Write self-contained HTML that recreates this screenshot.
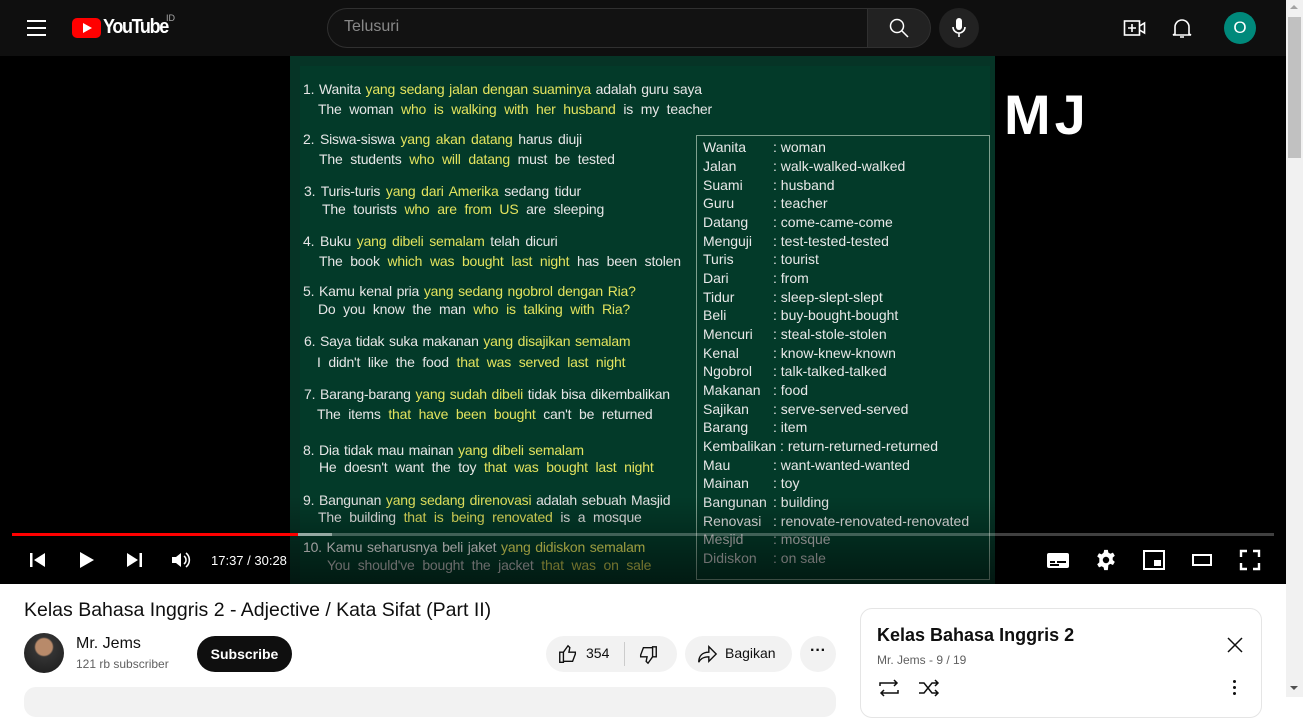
<!DOCTYPE html>
<html><head><meta charset="utf-8"><style>
*{margin:0;padding:0;box-sizing:border-box}
body{width:1303px;height:697px;overflow:hidden;background:#fff;font-family:"Liberation Sans",sans-serif;position:relative}
.hdr{position:absolute;left:0;top:0;width:1286px;height:56px;background:#0f0f0f}
.sb{position:absolute;left:1286px;top:0;width:17px;height:697px;background:#f1f1f1}
.thumb{position:absolute;left:1288px;top:17px;width:13px;height:141px;background:#c1c1c1}
.vid{position:absolute;left:0;top:56px;width:1286px;height:528px;background:#000;overflow:hidden}
.board{position:absolute;left:290px;top:0;width:705px;height:528px;background:#063426}
.inner{position:absolute;left:300px;top:10px;width:690px;height:516px;background:#033a29}
.t{position:absolute;color:#e6e6e6;font-size:14px;white-space:nowrap;letter-spacing:-0.2px}
.e{word-spacing:4px}
.y{color:#e3e35e}
.tbl{position:absolute;left:696px;top:79px;width:294px;height:445px;border:1.5px solid #7fa08f}
.r{position:absolute;left:703px;color:#e8e8e8;font-size:14px;white-space:nowrap}
.r b{font-weight:normal;position:absolute;left:70px}
.ctl{position:absolute;color:#fff}
</style></head><body>
<div class="hdr">
 <div style="position:absolute;left:27px;top:20px;width:19px;height:2px;background:#fff;box-shadow:0 7px 0 #fff,0 14px 0 #fff"></div>
 <div style="position:absolute;left:72px;top:18px;width:29px;height:20px;background:#f00;border-radius:5px"></div>
 <div style="position:absolute;left:83px;top:23px;border-left:9px solid #fff;border-top:5px solid transparent;border-bottom:5px solid transparent"></div>
 <div style="position:absolute;left:103px;top:16px;color:#fff;font-size:20px;font-weight:bold;letter-spacing:-1.5px;transform:scaleX(.9);transform-origin:left">YouTube</div>
 <div style="position:absolute;left:166px;top:13px;color:#aaa;font-size:9px">ID</div>
 <div style="position:absolute;left:327px;top:8px;width:541px;height:40px;border:1px solid #303030;border-right:none;border-radius:20px 0 0 20px;background:#121212"></div>
 <div style="position:absolute;left:344px;top:18px;color:#888;font-size:16px">Telusuri</div>
 <div style="position:absolute;left:867px;top:8px;width:64px;height:40px;border:1px solid #303030;border-radius:0 20px 20px 0;background:#222"></div>
 <svg style="position:absolute;left:888px;top:17px" width="22" height="22" viewBox="0 0 22 22" fill="none" stroke="#fff" stroke-width="1.5"><circle cx="9" cy="9" r="6.5"/><path d="M14 14l6 6"/></svg>
 <div style="position:absolute;left:939px;top:8px;width:40px;height:40px;border-radius:50%;background:#222"></div>
 <svg style="position:absolute;left:949px;top:17px" width="20" height="22" viewBox="0 0 20 22"><rect x="7" y="1" width="6" height="12" rx="3" fill="#fff"/><path d="M4 10a6 6 0 0 0 12 0M10 16v4" stroke="#fff" stroke-width="1.6" fill="none"/></svg>
 <svg style="position:absolute;left:1123px;top:17px" width="24" height="22" viewBox="0 0 24 22" fill="none" stroke="#fff" stroke-width="1.6"><rect x="1.5" y="4" width="15" height="14"/><path d="M16.5 9l5-3v10l-5-3M9 7v8M5 11h8"/></svg>
 <svg style="position:absolute;left:1172px;top:16px" width="20" height="24" viewBox="0 0 20 24" fill="none" stroke="#fff" stroke-width="1.6"><path d="M3 18V11a7 7 0 0 1 14 0v7l2 1H1z M8 21h4"/></svg>
 <div style="position:absolute;left:1224px;top:12px;width:32px;height:32px;border-radius:50%;background:#00897b;color:#fff;font-size:17px;text-align:center;line-height:32px">O</div>
</div>
<div class="sb"></div><div class="thumb"></div>
<div style="position:absolute;left:1290px;top:5px;border-bottom:4px solid #a3a3a3;border-left:4px solid transparent;border-right:4px solid transparent"></div>
<div style="position:absolute;left:1290px;top:686px;border-top:4px solid #505050;border-left:4px solid transparent;border-right:4px solid transparent"></div>
<div class="vid">
 <div class="board"></div><div class="inner"></div>
 <div class="t" style="left:303px;top:25px;word-spacing:1px">1. Wanita <span class="y">yang sedang jalan dengan suaminya</span> adalah guru saya</div>
 <div class="t e" style="left:318px;top:45px">The woman <span class="y">who is walking with her husband</span> is my teacher</div>
 <div class="t" style="left:303px;top:75px;word-spacing:2px">2. Siswa-siswa <span class="y">yang akan datang</span> harus diuji</div>
 <div class="t e" style="left:319px;top:95px">The students <span class="y">who will datang</span> must be tested</div>
 <div class="t" style="left:304px;top:127px;word-spacing:2px">3. Turis-turis <span class="y">yang dari Amerika</span> sedang tidur</div>
 <div class="t e" style="left:322px;top:145px">The tourists <span class="y">who are from US</span> are sleeping</div>
 <div class="t" style="left:303px;top:177px;word-spacing:2px">4. Buku <span class="y">yang dibeli semalam</span> telah dicuri</div>
 <div class="t e" style="left:319px;top:197px">The book <span class="y">which was bought last night</span> has been stolen</div>
 <div class="t" style="left:303px;top:227px;word-spacing:1px">5. Kamu kenal pria <span class="y">yang sedang ngobrol dengan Ria?</span></div>
 <div class="t e" style="left:318px;top:245px">Do you know the man <span class="y">who is talking with Ria?</span></div>
 <div class="t" style="left:304px;top:277px;word-spacing:1px">6. Saya tidak suka makanan <span class="y">yang disajikan semalam</span></div>
 <div class="t e" style="left:317px;top:298px">I didn't like the food <span class="y">that was served last night</span></div>
 <div class="t" style="left:304px;top:330px;word-spacing:1px">7. Barang-barang <span class="y">yang sudah dibeli</span> tidak bisa dikembalikan</div>
 <div class="t e" style="left:317px;top:350px">The items <span class="y">that have been bought</span> can't be returned</div>
 <div class="t" style="left:303px;top:386px;word-spacing:1px">8. Dia tidak mau mainan <span class="y">yang dibeli semalam</span></div>
 <div class="t e" style="left:319px;top:403px">He doesn't want the toy <span class="y">that was bought last night</span></div>
 <div class="t" style="left:303px;top:436px;word-spacing:1px">9. Bangunan <span class="y">yang sedang direnovasi</span> adalah sebuah Masjid</div>
 <div class="t e" style="left:318px;top:453px">The building <span class="y">that is being renovated</span> is a mosque</div>
 <div class="t" style="left:303px;top:483px;word-spacing:1px">10. Kamu seharusnya beli jaket <span class="y">yang didiskon semalam</span></div>
 <div class="t e" style="left:327px;top:501px;color:#bbb">You should've bought the jacket <span class="y" style="color:#c8c850">that was on sale</span></div>
 <div class="tbl"></div>
 <div class="r" style="top:83px">Wanita<b>: woman</b></div>
 <div class="r" style="top:102px">Jalan<b>: walk-walked-walked</b></div>
 <div class="r" style="top:121px">Suami<b>: husband</b></div>
 <div class="r" style="top:139px">Guru<b>: teacher</b></div>
 <div class="r" style="top:158px">Datang<b>: come-came-come</b></div>
 <div class="r" style="top:177px">Menguji<b>: test-tested-tested</b></div>
 <div class="r" style="top:195px">Turis<b>: tourist</b></div>
 <div class="r" style="top:214px">Dari<b>: from</b></div>
 <div class="r" style="top:233px">Tidur<b>: sleep-slept-slept</b></div>
 <div class="r" style="top:251px">Beli<b>: buy-bought-bought</b></div>
 <div class="r" style="top:270px">Mencuri<b>: steal-stole-stolen</b></div>
 <div class="r" style="top:289px">Kenal<b>: know-knew-known</b></div>
 <div class="r" style="top:307px">Ngobrol<b>: talk-talked-talked</b></div>
 <div class="r" style="top:326px">Makanan<b>: food</b></div>
 <div class="r" style="top:345px">Sajikan<b>: serve-served-served</b></div>
 <div class="r" style="top:363px">Barang<b>: item</b></div>
 <div class="r" style="top:382px">Kembalikan : return-returned-returned</div>
 <div class="r" style="top:401px">Mau<b>: want-wanted-wanted</b></div>
 <div class="r" style="top:419px">Mainan<b>: toy</b></div>
 <div class="r" style="top:438px">Bangunan<b>: building</b></div>
 <div class="r" style="top:457px">Renovasi<b>: renovate-renovated-renovated</b></div>
 <div class="r" style="top:475px;color:#bbb">Mesjid<b>: mosque</b></div>
 <div class="r" style="top:494px;color:#bbb">Didiskon<b>: on sale</b></div>
 <div style="position:absolute;left:1004px;top:26px;color:#fff;font-size:56px;font-weight:bold;letter-spacing:4px">MJ</div>
 <div style="position:absolute;left:0;top:440px;width:1286px;height:88px;background:linear-gradient(transparent,rgba(0,0,0,.55))"></div>
 <div style="position:absolute;left:12px;top:477px;width:1262px;height:3px;background:rgba(255,255,255,.25)"></div>
 <div style="position:absolute;left:298px;top:477px;width:34px;height:3px;background:rgba(255,255,255,.45)"></div>
 <div style="position:absolute;left:12px;top:477px;width:286px;height:3px;background:#f00"></div>
 <svg style="position:absolute;left:28px;top:494px" width="20" height="20" viewBox="0 0 20 20" fill="#fff"><rect x="2" y="3" width="2.5" height="14"/><path d="M17 3v14L6 10z"/></svg>
 <svg style="position:absolute;left:77px;top:494px" width="20" height="20" viewBox="0 0 20 20" fill="#fff"><path d="M3 2v16l14-8z"/></svg>
 <svg style="position:absolute;left:124px;top:494px" width="20" height="20" viewBox="0 0 20 20" fill="#fff"><rect x="15.5" y="3" width="2.5" height="14"/><path d="M3 3v14l11-7z"/></svg>
 <svg style="position:absolute;left:170px;top:494px" width="22" height="20" viewBox="0 0 22 20" fill="#fff"><path d="M2 7h4l5-4v14l-5-4H2z"/><path d="M14 6a5 5 0 0 1 0 8M16 3a9 9 0 0 1 0 14" stroke="#fff" stroke-width="1.6" fill="none"/></svg>
 <div class="ctl" style="left:211px;top:497px;font-size:13px">17:37 / 30:28</div>
 <svg style="position:absolute;left:1046px;top:494px" width="24" height="20" viewBox="0 0 24 20" fill="#fff"><rect x="1" y="3" width="22" height="15" rx="2"/><rect x="4" y="11" width="5" height="2" fill="#000"/><rect x="11" y="11" width="9" height="2" fill="#000"/><rect x="4" y="14" width="9" height="2" fill="#000"/></svg>
 <svg style="position:absolute;left:1095px;top:493px" width="22" height="22" viewBox="0 0 24 24" fill="#fff"><path d="M10 1h4l.6 3 2.2 1.2 2.8-1.2 2 3.4-2.3 2v2.6l2.3 2-2 3.4-2.8-1.2-2.2 1.2L14 23h-4l-.6-3-2.2-1.2-2.8 1.2-2-3.4 2.3-2V10l-2.3-2 2-3.4 2.8 1.2L9.4 4z"/><circle cx="12" cy="12" r="3.5" fill="#000"/></svg>
 <svg style="position:absolute;left:1142px;top:493px" width="24" height="22" viewBox="0 0 24 22" fill="none" stroke="#fff" stroke-width="2"><rect x="2" y="2" width="20" height="18"/><rect x="12" y="11" width="7" height="6" fill="#fff" stroke="none"/></svg>
 <svg style="position:absolute;left:1191px;top:495px" width="22" height="18" viewBox="0 0 22 18" fill="none" stroke="#fff" stroke-width="2"><rect x="2" y="4" width="18" height="10"/></svg>
 <svg style="position:absolute;left:1239px;top:493px" width="22" height="22" viewBox="0 0 22 22" fill="none" stroke="#fff" stroke-width="2.4"><path d="M2 8V2h6M14 2h6v6M20 14v6h-6M8 20H2v-6"/></svg>
</div>
<div style="position:absolute;left:24px;top:599px;font-size:19.5px;color:#0f0f0f;letter-spacing:0px">Kelas Bahasa Inggris 2 - Adjective / Kata Sifat (Part II)</div>
<div style="position:absolute;left:24px;top:633px;width:40px;height:40px;border-radius:50%;background:radial-gradient(circle at 50% 35%,#b88a6a 0 25%,#333 30%,#1a1a1a)"></div>
<div style="position:absolute;left:76px;top:635px;font-size:16px;color:#0f0f0f">Mr. Jems</div>
<div style="position:absolute;left:76px;top:657px;font-size:12px;color:#606060">121 rb subscriber</div>
<div style="position:absolute;left:197px;top:636px;width:95px;height:36px;border-radius:18px;background:#0f0f0f;color:#fff;font-size:14px;font-weight:bold;text-align:center;line-height:36px">Subscribe</div>
<div style="position:absolute;left:546px;top:636px;width:131px;height:36px;border-radius:18px;background:#f2f2f2"></div>
<div style="position:absolute;left:624px;top:642px;width:1px;height:24px;background:#ccc"></div>
<svg style="position:absolute;left:557px;top:643px" width="22" height="22" viewBox="0 0 24 24" fill="none" stroke="#0f0f0f" stroke-width="1.5"><path d="M3 10h4v11H3zM7 20h10l3-8v-2h-7l1-5-2-2-5 7"/></svg>
<div style="position:absolute;left:586px;top:645px;font-size:14px;color:#0f0f0f">354</div>
<svg style="position:absolute;left:637px;top:644px" width="22" height="22" viewBox="0 0 24 24" fill="none" stroke="#0f0f0f" stroke-width="1.5"><path d="M21 14h-4V3h4zM17 4H7l-3 8v2h7l-1 5 2 2 5-7"/></svg>
<div style="position:absolute;left:685px;top:636px;width:107px;height:36px;border-radius:18px;background:#f2f2f2"></div>
<svg style="position:absolute;left:696px;top:643px" width="22" height="22" viewBox="0 0 24 24" fill="none" stroke="#0f0f0f" stroke-width="1.5"><path d="M14 4l8 8-8 8v-5c-6 0-9 2-11 6 0-7 4-11 11-11z"/></svg>
<div style="position:absolute;left:725px;top:645px;font-size:14px;color:#0f0f0f">Bagikan</div>
<div style="position:absolute;left:800px;top:636px;width:36px;height:36px;border-radius:50%;background:#f2f2f2;text-align:center;font-size:16px;line-height:30px;font-weight:bold;color:#0f0f0f">···</div>
<div style="position:absolute;left:24px;top:687px;width:812px;height:30px;border-radius:12px;background:#f2f2f2"></div>
<div style="position:absolute;left:860px;top:608px;width:402px;height:110px;border:1px solid #e5e5e5;border-radius:12px"></div>
<div style="position:absolute;left:877px;top:625px;font-size:18px;font-weight:bold;color:#0f0f0f">Kelas Bahasa Inggris 2</div>
<div style="position:absolute;left:877px;top:653px;font-size:12px;color:#606060">Mr. Jems - 9 / 19</div>
<svg style="position:absolute;left:1226px;top:636px" width="18" height="18" viewBox="0 0 18 18" stroke="#0f0f0f" stroke-width="1.5"><path d="M2 2l14 14M16 2L2 16"/></svg>
<svg style="position:absolute;left:877px;top:678px" width="24" height="20" viewBox="0 0 24 20" fill="none" stroke="#0f0f0f" stroke-width="1.5"><path d="M3 8V5h17M17 2l3 3-3 3M21 12v3H4M7 18l-3-3 3-3"/></svg>
<svg style="position:absolute;left:917px;top:678px" width="24" height="20" viewBox="0 0 24 20" fill="none" stroke="#0f0f0f" stroke-width="1.5"><path d="M2 5h5l8 10h5M2 15h5l8-10h5M18 2l3 3-3 3M18 12l3 3-3 3"/></svg>
<div style="position:absolute;left:1233px;top:680px;width:3px;height:3px;border-radius:50%;background:#0f0f0f;box-shadow:0 6px 0 #0f0f0f,0 12px 0 #0f0f0f"></div>
</body></html>
